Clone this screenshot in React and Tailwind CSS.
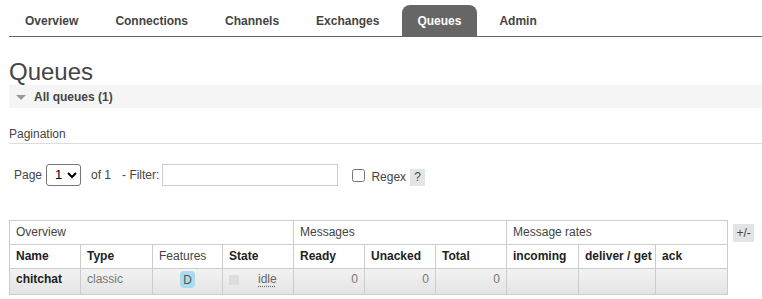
import { useState } from 'react';

const TABS = ['Overview', 'Connections', 'Channels', 'Exchanges', 'Queues', 'Admin'];

const COLS = [
  { label: 'Name', w: 'w-[71px]' },
  { label: 'Type', w: 'w-[72px]' },
  { label: 'Features', w: 'w-[70px]', normal: true },
  { label: 'State', w: 'w-[71px]' },
  { label: 'Ready', w: 'w-[71px]' },
  { label: 'Unacked', w: 'w-[71px]' },
  { label: 'Total', w: 'w-[71px]' },
  { label: 'incoming', w: 'w-[72px]' },
  { label: 'deliver / get', w: 'w-[77px]' },
  { label: 'ack', w: 'w-[72px]' },
];

export default function App() {
  const [page, setPage] = useState('1');
  const [filter, setFilter] = useState('');
  const [regex, setRegex] = useState(false);

  return (
    <div className="w-[762px] h-[299px] overflow-hidden bg-white text-[12px] text-[#444] font-['Liberation_Sans',Arial,sans-serif]">
      {/* top menu */}
      <div className="ml-[9px] pt-[5px] border-b border-[#666]">
        <ul className="flex gap-[7px] ml-[1px]">
          {TABS.map((t) => (
            <li
              key={t}
              className={`h-[31px] px-[15px] flex items-center font-bold rounded-t-[8px] ${
                t === 'Queues' ? 'bg-[#666] text-white ml-[1px] pr-[16px]' : 'text-[#444]'
              }`}
            >
              {t}
            </li>
          ))}
        </ul>
      </div>

      <div className="pl-[9px]">
        <h1 className="mt-[21px] text-[24px] leading-[27px] text-[#444]">Queues</h1>

        {/* section header */}
        <div className="h-[23px] bg-[#f5f5f5] flex items-center">
          <svg width="10" height="5" viewBox="0 0 10 5" className="ml-[7px] mt-[1px]">
            <polygon points="0,0 10,0 5,5" fill="#999" />
          </svg>
          <span className="ml-[8px] font-bold text-[#444]">All queues (1)</span>
        </div>

        <div className="mt-[19px] pb-[2px] border-b border-[#ddd] leading-[14px]">Pagination</div>

        <div className="mt-[19px] pl-[5px] flex items-center h-[23px]">
          <span>Page</span>
          <select
            value={page}
            onChange={(e) => setPage(e.target.value)}
            className="ml-[4px] w-[35px] h-[22px] border border-[#767676] rounded-[3px] bg-white text-[13px] text-black pl-[4px]"
          >
            <option value="1">1</option>
          </select>
          <span className="ml-[10px]">of 1</span>
          <span className="ml-[11px]">- Filter:</span>
          <input
            type="text"
            value={filter}
            onChange={(e) => setFilter(e.target.value)}
            className="ml-[3px] w-[176px] h-[22px] border border-[#ccc] outline-none px-1"
          />
          <input
            type="checkbox"
            checked={regex}
            onChange={(e) => setRegex(e.target.checked)}
            className="ml-[14px] mt-[1px] w-[13px] h-[13px]"
          />
          <span className="ml-[6px] mt-[5px]">Regex</span>
          <span className="ml-[4px] mt-[5px] w-[15px] h-[17px] bg-[#e4e4e4] flex items-center justify-center">?</span>
        </div>

        <div className="mt-[34px] flex items-start">
          <table className="table-fixed border-collapse w-[718px]">
            <colgroup>
              {COLS.map((c) => (
                <col key={c.label} className={c.w} />
              ))}
            </colgroup>
            <thead>
              <tr>
                <th colSpan={4} className="h-[24px] px-[6px] pb-[1px] border border-[#ccc] font-normal text-left">Overview</th>
                <th colSpan={3} className="h-[24px] px-[6px] pb-[1px] border border-[#ccc] font-normal text-left">Messages</th>
                <th colSpan={3} className="h-[24px] px-[6px] pb-[1px] border border-[#ccc] font-normal text-left">Message rates</th>
              </tr>
              <tr>
                {COLS.map((c) => (
                  <th
                    key={c.label}
                    className={`h-[24px] px-[6px] pb-[1px] border border-[#ccc] text-left whitespace-nowrap ${
                      c.normal ? 'font-normal text-[#444]' : 'font-bold text-[#222]'
                    }`}
                  >
                    {c.label}
                  </th>
                ))}
              </tr>
            </thead>
            <tbody>
              <tr className="align-top leading-[14px] bg-gradient-to-b from-[#f3f3f3] to-[#e3e3e3]">
                <td className="h-[26px] px-[6px] pt-[3px] border border-[#ccc] font-bold text-[#222]">chitchat</td>
                <td className="px-[6px] pt-[3px] border border-[#ccc] text-[#777]">classic</td>
                <td className="px-[6px] pt-[2px] border border-[#ccc] text-center">
                  <span className="inline-flex items-center justify-center w-[15px] h-[17px] rounded-[4px] bg-[#aadcf0] text-[#555]">D</span>
                </td>
                <td className="px-[6px] pt-[3px] border border-[#ccc]">
                  <div className="flex items-center h-[14px]">
                    <span className="w-[10px] h-[10px] mt-[2px] bg-[#ddd]" />
                    <span className="ml-[19px] text-[#666] underline decoration-dotted underline-offset-[3px]">idle</span>
                  </div>
                </td>
                <td className="px-[6px] pt-[3px] border border-[#ccc] text-right text-[#777]">0</td>
                <td className="px-[6px] pt-[3px] border border-[#ccc] text-right text-[#777]">0</td>
                <td className="px-[6px] pt-[3px] border border-[#ccc] text-right text-[#777]">0</td>
                <td className="border border-[#ccc]" />
                <td className="border border-[#ccc]" />
                <td className="border border-[#ccc]" />
              </tr>
            </tbody>
          </table>
          <span className="ml-[5px] mt-[4px] w-[21px] h-[18px] bg-[#e4e4e4] flex items-center justify-center text-[#444]">+/-</span>
        </div>
      </div>
    </div>
  );
}
